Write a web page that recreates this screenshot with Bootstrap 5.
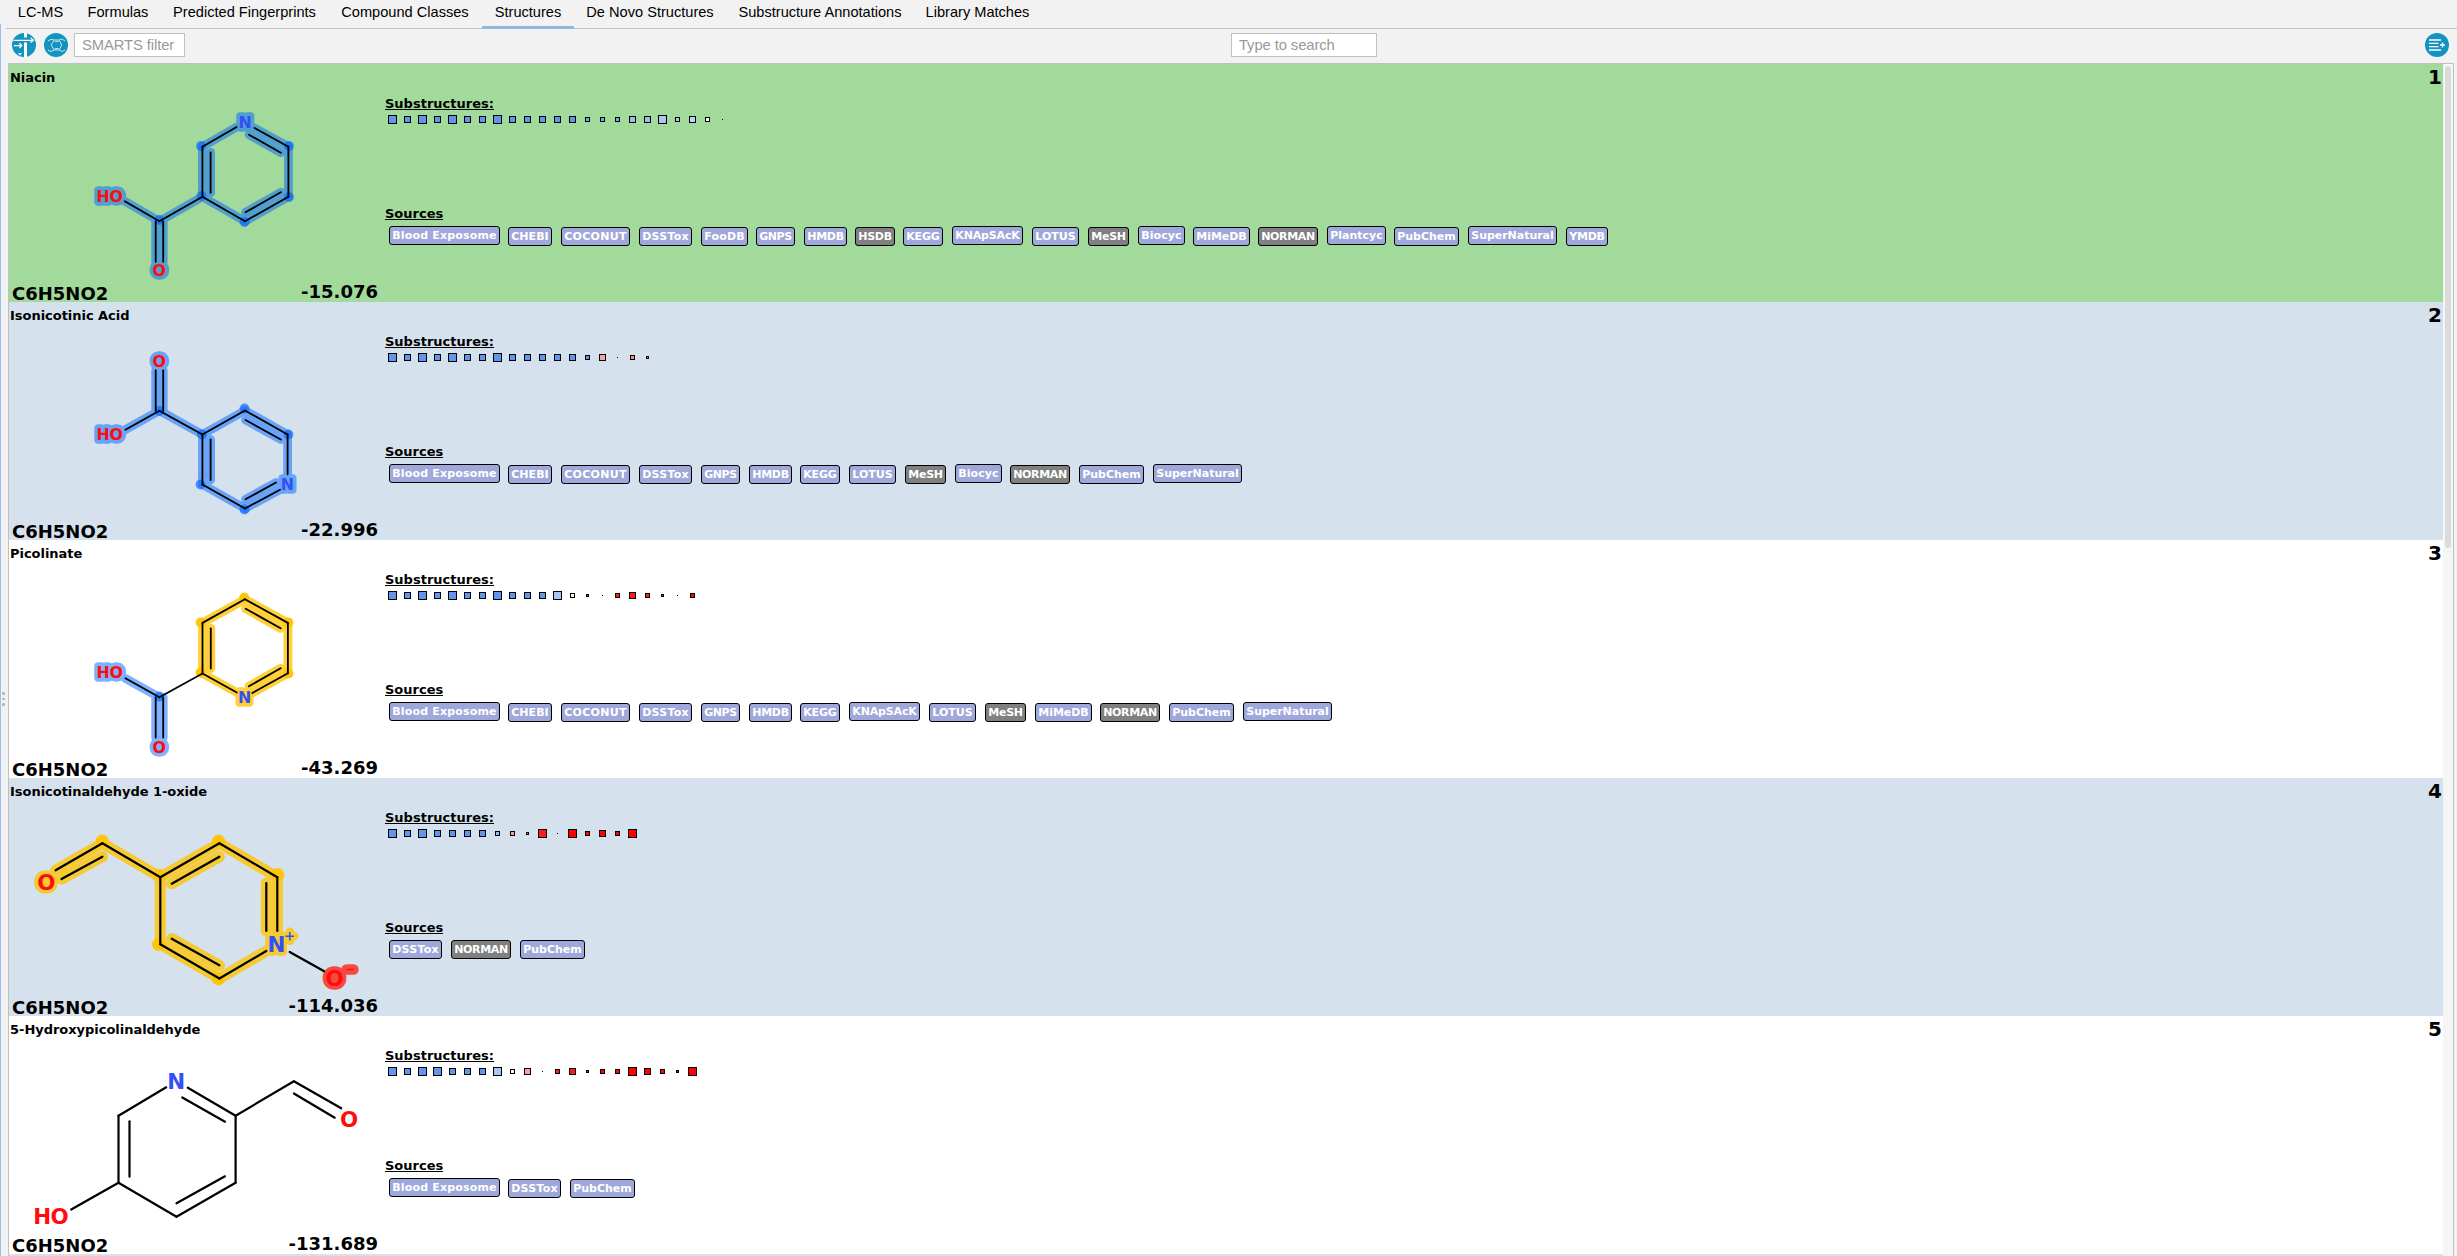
<!DOCTYPE html>
<html lang="en">
<head>
<meta charset="utf-8">
<title>Structures</title>
<link rel="stylesheet" href="https://cdn.jsdelivr.net/npm/bootstrap@5.3.0/dist/css/bootstrap.min.css">
<style>
html,body{height:1256px;overflow:hidden}
body{background:#f2f2f2;color:#000;font-family:"Liberation Sans",Arial,sans-serif;font-size:14.6px;line-height:1}
.split-bar{width:6px;height:1232px;border-left:1px solid #98c0ee;margin-top:24px;padding-top:118px;gap:3px}
.split-bar i{width:2.4px;height:2.4px;border-radius:50%;background:#b4b4b4}
.tabs-line{height:29px;border-bottom:1px solid #c0c0c0;box-sizing:border-box}
.tabs-line .nav-link{color:#000;padding:3px 0 0;height:29px;text-align:center;line-height:18px;white-space:nowrap}
.tabs-line .nav-link.active{border-bottom:3px solid #90b7de}
.tool-line{height:34px;padding:4px 6px 0 6px}
.tool-line svg{display:block;width:24px;height:24px;flex:none}
.tool-line .form-control{height:24px;border:1px solid #c0c0c0;border-radius:0;padding:0 7px;font-size:14.8px;line-height:22px;background:#fff;letter-spacing:-.1px}
.form-control.smarts{width:111px;margin-left:6px}
.form-control.finder{width:146px;margin-left:1046px}
.form-control::placeholder{color:#999;opacity:1}
.tool-line .export-icon{margin-left:1048px}
.hits-frame{margin-left:2px;width:2446px;height:1193px;border:1px solid #c0c0c0;border-bottom:0}
.scroll-track{width:10px;background:#f5f5f5;padding:2px 2px}
.scroll-thumb{width:6px;border-radius:3px;background:#dbdbdb;height:482px}
.hit{height:238px;flex:none;font-family:"DejaVu Sans",sans-serif;font-weight:700;background:#fff}
.hit:nth-child(even){background:#d5e2ed}
.hit.confirmed{background:#a2da9b}
.hit-left{width:376px;position:relative}
.hit-left svg{position:absolute;left:0;top:0;width:376px;height:238px}
.hit-name{font-size:13px;line-height:16px;padding:6px 0 0 1px;white-space:nowrap;letter-spacing:-.03px}
.hit-foot{font-size:18px;line-height:22px;padding:0 7px 0 3px;margin-bottom:-3px}
.hit-foot .score{margin-top:-2px;margin-bottom:2px}
.hit-title{font-size:13px;line-height:15px;border-bottom:1px solid #000;align-self:flex-start;height:14px}
.hit-info{padding-top:32px}
.subs{height:9px;margin:5px 0 82px}
.subs span{width:15px;height:9px}
.subs b{border:1px solid #000}
.subs b.speck{border:0}
.tags{margin:6px 0 0 4px}
.tags .tag{font-size:11px;line-height:17px;height:19px;border:1px solid #000;border-radius:3px;color:#fff;background:#9fa8da;text-align:center;white-space:nowrap;margin-top:1px}
.tags .tag.up{margin-top:0}
.tags .tag.off{background:#808080}
.rank{font-size:20px;line-height:24px;padding:1px 1px 0 0}
.bond{stroke:#000;stroke-linecap:round;stroke-linejoin:round;fill:none}
.halo{fill:none;stroke-linecap:round;stroke-linejoin:round}
svg text{font-family:"DejaVu Sans",sans-serif;font-weight:700;text-anchor:middle}
</style>
</head>
<body>
<div class="d-flex h-100">
  <div class="split-bar d-flex flex-column align-items-center justify-content-center flex-shrink-0"><i></i><i></i><i></i></div>
  <div class="flex-grow-1">
    <nav class="nav tabs-line flex-nowrap" id="tabs"></nav>
    <div class="tool-line d-flex">
      <svg viewBox="0 0 24 24"><circle cx="12" cy="12" r="12" fill="#1593c0"/><path d="M12 0h3v4.600h-3zM12 9.600h3V24h-3z" fill="#fff"/><path d="M1.500 7.300H21M18.500 4.600 21.500 7.300 18.500 9.600M2 12.600H9.500M7.300 10.300 9.800 12.600 7.300 15" fill="none" stroke="#fff" stroke-width="1.200"/><path d="M6 20h4l-2 2.600z" fill="#fff"/></svg>
      <svg class="ms-2" viewBox="0 0 24 24"><circle cx="12" cy="12" r="12" fill="#1593c0"/><g fill="none" stroke="#c4e6f2" stroke-width="1"><path d="M7.300 12 10 7h5.200l2.500 5-2.500 5H10zM10 17 7 18.500 3.800 17M10 7 7 6.300 4 8M15.200 7l3-1L21 8M15.200 17l3 1.500L21 17M10.800 8.500h3.700M10.800 15.500h3.700"/></g></svg>
      <input class="form-control smarts" placeholder="SMARTS filter">
      <input class="form-control finder" placeholder="Type to search">
      <svg class="export-icon" viewBox="0 0 24 24"><circle cx="12" cy="12" r="12" fill="#1593c0"/><path d="M4 7H16M4 10.300H13.500M4 13.700H13.500M4 17H16M15 12h5M17.500 9.600v4.800" stroke="#fff" stroke-width="1.300" fill="none"/></svg>
    </div>
    <div class="hits-frame d-flex overflow-hidden">
      <div class="flex-grow-1 d-flex flex-column" id="hits"></div>
      <div class="scroll-track"><div class="scroll-thumb"></div></div>
    </div>
  </div>
</div>
<script>
const tabs=[['LC-MS',69],['Formulas',86],['Predicted Fingerprints',167],['Compound Classes',154],['Structures',92],['De Novo Structures',152],['Substructure Annotations',188],['Library Matches',127]];
document.getElementById('tabs').innerHTML=tabs.map(([t,w])=>`<a class="nav-link${t==='Structures'?' active':''}" style="width:${w}px">${t}</a>`).join('');

// source name: [slot width, tag width]
const SRC={'Blood Exposome':[119,111],CHEBI:[53,44],COCONUT:[78,69],DSSTox:[62,53],FooDB:[55,47],GNPS:[48,39],HMDB:[51,43],HSDB:[48,40],KEGG:[49,40],KNApSAcK:[80,71],LOTUS:[56,47],MeSH:[50,41],Biocyc:[55,47],MiMeDB:[65,57],NORMAN:[69,60],Plantcyc:[67,59],PubChem:[74,65],SuperNatural:[98,89],YMDB:[50,42]};
const OFF=['HSDB','MeSH','NORMAN'];
const COL={b:'#6495ed',c:'#7ba6f2',l:'#9bbcf5',m:'#abc6f6',n:'#bcd2fa',w:'#fff',p:'#ff9f9f',q:'#ff8a80',r:'#ff1a1a',s:'#ff0000'};
const BLUE='#0066ff',GOLD='#ffc400',RED='#ff2010';
// b: bonds [x1,y1,x2,y2,halo]; d: atom dots; t: labels; c: charge signs
const hits=[
{name:'Niacin',score:'-15.076',
 subs:'9b 7b 9b 7b 9b 7b 7b 9b 7b 7b 7b 7b 7b 5c 5c 5c 7l 7l 9m 5m 7n 5w 1w',
 src:'Blood Exposome,CHEBI,COCONUT,DSSTox,FooDB,GNPS,HMDB,HSDB,KEGG,KNApSAcK,LOTUS,MeSH,Biocyc,MiMeDB,NORMAN,Plantcyc,PubChem,SuperNatural,YMDB',
 y:64,k:1,fs:15.8,
 b:[[202.4,146.7,236.6,127,BLUE],[254.5,128,288.4,146.7,BLUE],[249,134.7,280.8,152.7,BLUE],[288.4,146.7,288.4,196.7,BLUE],[288.4,196.7,245,221.3,BLUE],[280.8,192.3,245.5,212.3,BLUE],[245,221.3,202.4,196.7,BLUE],[202.4,196.7,202.4,146.7,BLUE],[210.6,152.300,210.6,192.7,BLUE],[202.4,196.7,159.4,221.3,BLUE],[159.4,221.3,124.8,201.3,BLUE],[155.7,221.5,155.7,261.7,BLUE],[163.2,221.5,163.2,261.7,BLUE]],
 d:[[201,146,BLUE],[289,146,BLUE],[289,197,BLUE],[244.500,222,BLUE],[201.500,196,BLUE],[159.4,220,BLUE]],
 t:[['N',245,122.3,'#3050f8',BLUE],['H',103.1,196.5,'#ff0d0d',BLUE],['O',116.2,196.5,'#ff0d0d',BLUE],['O',159.2,270.5,'#ff0d0d',BLUE]]},
{name:'Isonicotinic Acid',score:'-22.996',
 subs:'9b 7b 9b 7b 9b 7b 7b 9b 7b 7b 7b 7b 7b 5b 7p 1w 5q 3q',
 src:'Blood Exposome,CHEBI,COCONUT,DSSTox,GNPS,HMDB,KEGG,LOTUS,MeSH,Biocyc,NORMAN,PubChem,SuperNatural',
 y:302,k:1,fs:15.8,
 b:[[155.7,370.3,155.7,410.7,BLUE],[163.2,370.3,163.2,410.7,BLUE],[159.4,410.7,125.4,429.7,BLUE],[159.4,410.7,202.4,434.5,BLUE],[202.4,434.5,245,410.5,BLUE],[245,410.5,287.6,434.5,BLUE],[245.5,420,280.8,439.5,BLUE],[287.6,434.5,287.6,474.3,BLUE],[280,489.700,245,508.5,BLUE],[276,482.5,245.5,499.3,BLUE],[245,508.5,202.4,484.5,BLUE],[202.4,484.5,202.4,434.5,BLUE],[210.6,439.5,210.6,480,BLUE]],
 d:[[159.4,411,BLUE],[202,434.5,BLUE],[244.5,408.5,BLUE],[288.500,434.5,BLUE],[244.5,509.5,BLUE],[200.5,484.5,BLUE]],
 t:[['O',159.2,360.8,'#ff0d0d',BLUE],['H',103.1,434.5,'#ff0d0d',BLUE],['O',116.2,434.5,'#ff0d0d',BLUE],['N',287.300,484.100,'#3050f8',BLUE]]},
{name:'Picolinate',score:'-43.269',
 subs:'9b 7b 9b 7b 9b 7b 7b 9b 7b 7b 7b 9m 5w 3r 1w 5r 7r 5r 3r 1w 5s',
 src:'Blood Exposome,CHEBI,COCONUT,DSSTox,GNPS,HMDB,KEGG,KNApSAcK,LOTUS,MeSH,MiMeDB,NORMAN,PubChem,SuperNatural',
 y:540,k:1,fs:15.8,
 b:[[244.9,599.3,287.9,622.9,GOLD],[245.7,608.7,280.6,628.3,GOLD],[287.9,622.9,287.9,673.3,GOLD],[287.9,673.300,252.3,693,GOLD],[280.6,668.3,248.9,686.3,GOLD],[236.8,692.5,202.5,673.5,GOLD],[202.5,673.5,202.5,622.9,GOLD],[210.8,628.3,210.8,668.5,GOLD],[202.5,622.9,244.9,599.3,GOLD],[202.5,673.5,159.4,697.3,''],[159.4,697.3,125.4,678.3,BLUE],[155.7,697.5,155.7,737.5,BLUE],[163.2,697.5,163.2,737.5,BLUE]],
 d:[[244.2,597.5,GOLD],[288.5,622.5,GOLD],[288.5,673.5,GOLD],[200.5,672.5,GOLD],[200.5,622.500,GOLD],[159.4,696.5,BLUE]],
 t:[['N',244.7,697.500,'#3050f8',GOLD],['H',103.1,672.500,'#ff0d0d',BLUE],['O',116.2,672.500,'#ff0d0d',BLUE],['O',159.1,746.7,'#ff0d0d',BLUE]]},
{name:'Isonicotinaldehyde 1-oxide',score:'-114.036',
 subs:'9b 7b 9b 7b 7b 7b 7b 5l 5p 3q 9r 1w 9s 5s 7s 5s 9s',
 src:'DSSTox,NORMAN,PubChem',
 y:778,k:1.33,fs:21.4,
 b:[[55.6,870.3,102.4,843.3,GOLD],[61.5,879,102.4,856.7,GOLD],[102.4,843.3,160.3,877.2,GOLD],[160.3,877.2,219.4,843.3,GOLD],[171.7,883.700,219.4,856.7,GOLD],[219.4,843.3,277.3,877.2,GOLD],[277.3,877.2,277.3,931,GOLD],[266.3,883,266.3,931,GOLD],[266.3,951,219.4,978.500,GOLD],[219.4,978.5,160.3,944.3,GOLD],[219.4,965.3,171.7,938.7,GOLD],[160.3,944.3,160.3,877.2,GOLD],[289.7,952,324.2,971.3,'']],
 d:[[102.2,841,GOLD],[160,875.5,GOLD],[218.5,841,GOLD],[277.8,874.5,GOLD],[218.5,979,GOLD],[158.5,944.3,GOLD]],
 t:[['O',46.4,881.8,'#ff0d0d',GOLD],['N',276.500,944.500,'#3050f8',GOLD],['O',334.700,978,'#ff0d0d',RED]],
 c:[['M285.500 936.200H294M289.800 932V940.500','#3050f8',GOLD],['M346.500 969.500H353.500','#ff0d0d',RED]]},
{name:'5-Hydroxypicolinaldehyde',score:'-131.689',
 subs:'9b 7b 9b 9b 7b 7b 7b 9m 5w 7p 1w 5r 7r 3r 5s 5s 9s 7s 5s 3s 9s',
 src:'Blood Exposome,DSSTox,PubChem',
 y:1016,k:1.33,fs:21.4,
 b:[[166.2,1087.3,118.5,1115.7],[118.5,1115.7,118.5,1182.7],[129.5,1121.3,129.5,1176.7],[118.5,1182.7,176.5,1216.7],[176.5,1216.7,235.6,1182.7],[176.5,1203.3,225,1176.3],[235.6,1182.7,235.6,1115.7],[187.8,1087.7,235.6,1115.7],[182.3,1097.5,225,1121.7],[235.6,1115.7,293.9,1081.3],[293.9,1081.3,341.2,1108.3],[293.9,1093.5,334.7,1117.7],[118.5,1182.7,71.2,1209.5]],
 d:[],t:[['N',176.3,1081,'#3050f8'],['O',349,1119.5,'#ff0d0d'],['H',42.2,1215.8,'#ff0d0d'],['O',59.7,1215.8,'#ff0d0d']]}
];
function molecule(h){
  const groups=[[BLUE,.5],[GOLD,.78],[RED,.78]];
  const txt=(t,extra)=>`<text x="${t[1]}" y="${(t[2]+h.fs*.364).toFixed(1)}" font-size="${h.fs}" ${extra}>${t[0]}</text>`;
  let s='';
  for(const [c,o] of groups){
    const w=8.800*(1+(h.k-1)*.8);
    s+=`<g class="halo" opacity="${o}" stroke="${c}">`+
      h.b.filter(b=>b[4]===c).map(b=>`<path stroke-width="${w}" d="M${b[0]} ${b[1]}L${b[2]} ${b[3]}"/>`).join('')+
      h.t.filter(t=>t[4]===c).map(t=>txt(t,'stroke-width="7.6"')+txt(t,`stroke="none" fill="${c}"`)+(t[0]==='O'?`<circle cx="${t[1]}" cy="${t[2]}" r="3" stroke="none" fill="${c}"/>`:'')).join('')+
      (h.c||[]).filter(t=>t[2]===c).map(t=>`<path stroke-width="${c===RED?10.500:9}" d="${t[0]}"/>`).join('')+'</g>';
    s+=h.d.filter(d=>d[2]===c).map(d=>`<circle cx="${d[0]}" cy="${d[1]}" r="${4.900*h.k}" fill="${c}" opacity="${Math.min(1,o+.15)}"/>`).join('');
  }
  s+=`<g class="bond" stroke-width="${h.k>1?2.200:1.800}">`+h.b.map(b=>`<path d="M${b[0]} ${b[1]}L${b[2]} ${b[3]}"/>`).join('')+'</g>';
  s+=h.t.map(t=>txt(t,`fill="${t[3]}"`)).join('');
  s+=(h.c||[]).map(t=>`<path fill="none" stroke="${t[1]}" stroke-width="1.500" d="${t[0]}"/>`).join('');
  return `<svg viewBox="9 ${h.y} 376 238">${s}</svg>`;
}
// Tags whose name has a descender sit one pixel higher than the others
function tagList(src){
  const a=src.split(','),low=/[gpqy]/,any=a.some(n=>low.test(n));
  return a.map(n=>`<div style="width:${SRC[n][0]}px"><div class="tag${!any||low.test(n)?' up':''}${OFF.includes(n)?' off':''}" style="width:${SRC[n][1]}px"><span>${n}</span></div></div>`).join('');
}
document.getElementById('hits').innerHTML=hits.map((h,i)=>`
<div class="hit d-flex${i?'':' confirmed'}">
  <div class="hit-left d-flex flex-column justify-content-between">
    <div class="hit-name">${h.name}</div>${molecule(h)}
    <div class="hit-foot d-flex justify-content-between"><span>C6H5NO2</span><span class="score">${h.score}</span></div>
  </div>
  <div class="hit-info flex-grow-1 d-flex flex-column">
    <div class="hit-title">Substructures:</div>
    <div class="subs d-flex">${h.subs.split(' ').map(q=>`<span class="d-flex align-items-center justify-content-center"><b class="${q[0]==1?'speck':''}" style="width:${q[0]}px;height:${q[0]}px;background:${q[0]==1?'#000':COL[q[1]]}"></b></span>`).join('')}</div>
    <div class="hit-title">Sources</div>
    <div class="tags d-flex">${tagList(h.src)}</div>
  </div>
  <div class="rank">${i+1}</div>
</div>`).join('')+'<div class="hit"></div>';
// Spread the letters of each tag over its fixed width
document.querySelectorAll('.tag span').forEach(s=>{
  const room=s.parentNode.offsetWidth-6.500,n=s.textContent.length,ls=(room-s.getBoundingClientRect().width)/n;
  s.style.letterSpacing=ls.toFixed(3)+'px';
});
</script>
<script src="https://cdn.jsdelivr.net/npm/bootstrap@5.3.0/dist/js/bootstrap.bundle.min.js"></script>
</body>
</html>
